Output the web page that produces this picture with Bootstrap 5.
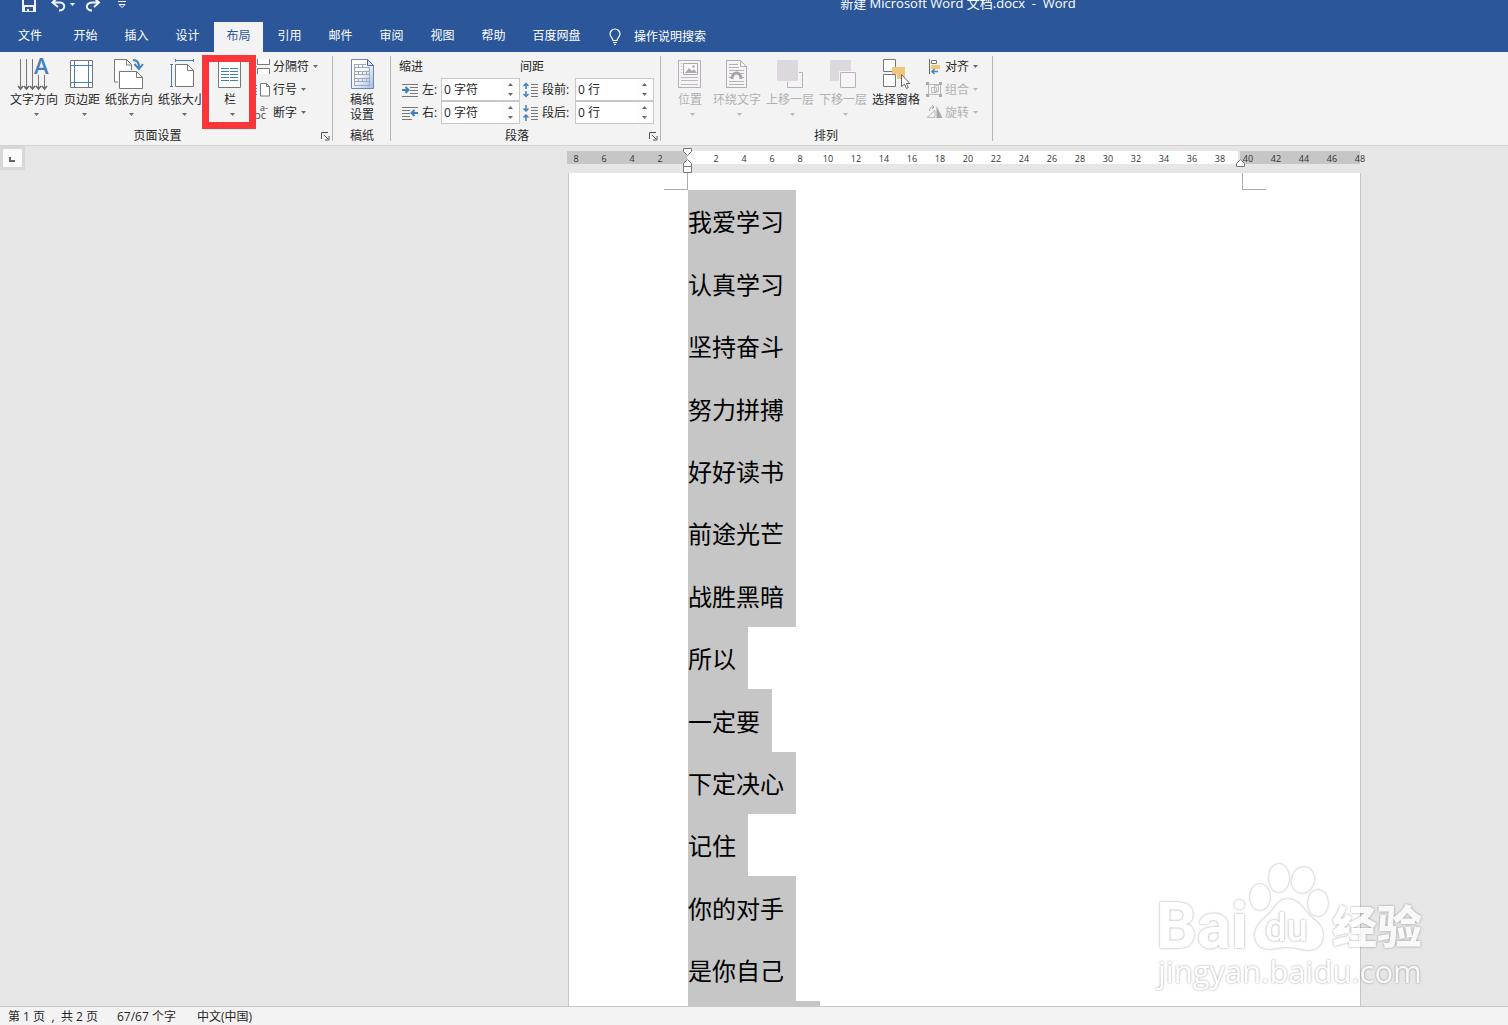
<!DOCTYPE html>
<html lang="zh-CN">
<head>
<meta charset="utf-8">
<meta name="viewport" content="width=device-width, initial-scale=1">
<title>新建 Microsoft Word 文档.docx - Word</title>
<link href="https://cdn.jsdelivr.net/npm/bootstrap@5.3.0/dist/css/bootstrap.min.css" rel="stylesheet">
<style>
  body { font-family: "Open Sans", "Noto Sans CJK SC", sans-serif; font-size: 12px; line-height: 16px; color: #262626; background: #e6e6e6; }
  svg { display: block; flex: none; overflow: visible; }
  .app-top { background: #2b579a; color: #fff; }
  .title-row { height: 22px; padding-left: 22px; }
  .title-row button, .plain-btn { background: none; border: 0; padding: 0; color: inherit; }
  .doc-title { left: 408px; right: 0; top: -6px; font-size: 13px; line-height: 18px; white-space: pre; }
  .tab-row { height: 30px; }
  .tab-row .nav-link { width: 49px; margin: 0 1px; padding: 0; line-height: 28px; text-align: center; color: #fff; border-radius: 0; white-space: nowrap; }
  .tab-row .nav-link.file-tab { width: 58px; }
  .tab-row .nav-link.wide-tab { width: 73px; }
  .tab-row .nav-link.active { background: #f3f3f3; color: #2b579a; }
  .tell-me { padding-left: 15px; gap: 13px; }
  .ribbon { height: 94px; background: #f3f3f3; border-bottom: 1px solid #d2d2d2; }
  .rgroup { position: relative; padding-top: 3px; }
  .rgroup::after { content: ""; position: absolute; right: 0; top: 4px; bottom: 4px; width: 1px; background: #b4b4b4; }
  .rbody { height: 73px; }
  .rlabel { line-height: 16px; text-align: center; padding-right: 2px; }
  .g-setup { width: 333px; } .g-setup .rbody { padding-left: 8px; }
  .g-grid { width: 58px; }
  .g-para { width: 270px; } .g-para .rbody { padding-left: 8px; }
  .g-arrange { width: 332px; } .g-arrange .rbody { padding-left: 7px; }
  .has-launcher .rlabel { padding-right: 18px; }
  .launcher { position: absolute; right: 3px; bottom: 4px; }
  .big-btn { display: flex; flex-direction: column; align-items: center; padding: 2px 0 0; border: 0; background: none; color: inherit; white-space: nowrap; flex: none; }
  .big-btn svg:first-child { margin-bottom: 1px; }
  .big-btn .caret { margin: 5px 0 0 4px; }
  .w40 { width: 40px; } .w44 { width: 44px; } .w50 { width: 50px; } .w52 { width: 52px; } .w56 { width: 56px; }
  .two-line { line-height: 15px; }
  .small-btn { display: flex; align-items: center; gap: 3px; height: 23px; padding: 0; border: 0; background: none; color: inherit; white-space: nowrap; }
  .small-col { margin-left: 4px; }
  .g-arrange .small-col { margin-left: 2px; }
  .small-btn .caret { margin-left: 1px; }
  button:disabled { color: #b1b1b1; }
  .caret { width: 5px; height: 3px; fill: #6a6a6a; }
  button:disabled .caret { fill: #b9b9b9; }
  .red-frame { left: 202px; top: 3px; width: 54px; height: 74px; border: 7px solid #fb3638; pointer-events: none; }
  .para-col { width: 121px; flex: none; }
  .para-col.spacing { width: 134px; }
  .para-col > div { height: 23px; }
  .para-col > div > svg { margin-left: 3px; }
  .para-col label { flex: 1; padding-left: 4px; white-space: nowrap; }
  .para-head { line-height: 23px; }
  .spin-box { width: 79px; height: 23px; border: 1px solid #c8c8c8; background: #fdfdfd; flex: none; }
  .spin-one { margin-right: 0; }
  .spin-box input { width: 60px; padding: 0 2px; border: 0; background: #fff; color: #262626; line-height: 19px; font-size: 12px; }
  .spin-box button { width: 17px; height: 10px; border: 0; padding: 0; background: none; display: flex; align-items: center; justify-content: center; }
  .workspace { display: grid; grid-template-columns: 567fr 794px 147fr; grid-template-rows: 27px 1fr; min-height: 0; overflow: hidden; }
  .tab-stop { width: 25px; height: 24px; border: 3px solid #d8d8d8; background: #fafafa; }
  .ruler { position: relative; height: 13px; margin-top: 5px; width: 793px; }
  .r-left { width: 120px; background: #c6c6c6; } .r-mid { flex: 1; background: #fff; margin-right: 2px; } .r-right { width: 120px; background: #c6c6c6; }
  .r-nums { position: absolute; left: -5px; top: 0; display: flex; font-size: 9px; line-height: 16px; color: #333; }
  .r-nums span { width: 28px; text-align: center; }
  .r-mark { position: absolute; top: -3px; }
  .m-zero { left: 116px; } .m-end { left: 669px; }
  .sheet { grid-column: 2; margin-left: 1px; background: #fff; border: 1px solid #c6c6c6; border-width: 0 1px; overflow: hidden; }
  .crop-marks { display: flex; justify-content: space-between; padding: 0 94px 0 95px; height: 17px; }
  .crop-marks i { width: 24px; border: 0 solid #ababab; border-bottom-width: 1px; }
  .crop-marks i:first-child { border-right-width: 1px; } .crop-marks i:last-child { border-left-width: 1px; }
  .doc-text { padding-left: 119px; font-family: "Noto Sans CJK SC", sans-serif; font-size: 24px; font-weight: 400; color: #000; }
  .doc-text p { width: max-content; margin: 0; padding-right: 12px; height: 62px; line-height: 61px; background: #c6c6c6; }
  .doc-text p:nth-child(5n+2), .doc-text p:nth-child(5n+4) { height: 63px; line-height: 63px; }
  .doc-text p.next-line { width: 132px; }
  .watermark { right: 73px; bottom: 25px; opacity: .75; }
  .watermark g { filter: drop-shadow(0 0 1px rgba(0,0,0,.5)); }
  .status { height: 19px; background: #f3f3f3; border-top: 1px solid #c6c6c6; padding-left: 8px; gap: 19px; line-height: 19px; }
  .status .counter { width: 61px; }
  .status .pages { width: 90px; display: flex; justify-content: space-between; }
</style>
<script src="https://cdn.jsdelivr.net/npm/bootstrap@5.3.0/dist/js/bootstrap.bundle.min.js"></script>
</head>
<body class="vh-100 d-flex flex-column overflow-hidden position-relative">

<svg width="0" height="0" class="position-absolute" aria-hidden="true">
  <symbol id="dn" viewBox="0 0 5 3"><path d="M0 0h5L2.500 3z"/></symbol>
  <symbol id="up" viewBox="0 0 5 3"><path d="M0 3h5L2.500 0z"/></symbol>
  <symbol id="launch" viewBox="0 0 9 9"><path d="M.5 7V.5H7M3 3l4 4M8 4v4H4" fill="none" stroke="#555"/></symbol>
</svg>

<header class="app-top flex-shrink-0">
  <div class="title-row d-flex position-relative overflow-hidden">
    <button type="button" aria-label="保存" class="align-self-start"><svg width="14" height="12" viewBox="22 0 14 12"><path d="M22 0h2v5h10V0h2v12H22zM25 7v4h2V9h2v2h4V7z" fill="#f0f3f8" fill-rule="evenodd"/></svg></button>
    <button type="button" aria-label="撤消" class="align-self-start ms-3"><svg width="25" height="12" viewBox="52 0 25 12"><path d="M57 -2L52.500 2.500 58 7M53 2.500h6c7-.5 7 8 0 8" fill="none" stroke="#f0f3f8" stroke-width="2"/><path d="M70 3h5l-2.500 3z" fill="#fff"/></svg></button>
    <button type="button" aria-label="恢复" class="align-self-start ms-2"><svg width="16" height="12" viewBox="85 0 16 12"><path d="M94-2l5 4.500L94 7M99 2.500h-6c-8 0-8 8-1 8" fill="none" stroke="#f0f3f8" stroke-width="2"/></svg></button>
    <button type="button" aria-label="自定义快速访问工具栏" class="align-self-start ms-3"><svg width="9" height="9" viewBox="117 0 9 9"><path d="M118 1.500h8M119 4.500h6l-3 3z" fill="none" stroke="#fff"/></svg></button>
    <div class="doc-title position-absolute text-center">新建 Microsoft Word 文档.docx  -  Word</div>
  </div>
  <nav class="tab-row nav flex-nowrap">
    <a class="nav-link file-tab" href="#">文件</a>
    <a class="nav-link" href="#">开始</a>
    <a class="nav-link" href="#">插入</a>
    <a class="nav-link" href="#">设计</a>
    <a class="nav-link active" href="#" aria-current="page">布局</a>
    <a class="nav-link" href="#">引用</a>
    <a class="nav-link" href="#">邮件</a>
    <a class="nav-link" href="#">审阅</a>
    <a class="nav-link" href="#">视图</a>
    <a class="nav-link" href="#">帮助</a>
    <a class="nav-link wide-tab" href="#">百度网盘</a>
    <button type="button" class="plain-btn tell-me d-flex align-items-center"><svg width="12" height="16" viewBox="0 0 12 16"><path d="M4 11.500C4 9 1 8 1 5a5 5 0 0 1 10 0c0 3-3 4-3 6.500zM4 13.500h4M5 15.500h2" fill="none" stroke="#fff" stroke-width="1.200"/></svg>操作说明搜索</button>
  </nav>
</header>

<section class="ribbon d-flex flex-shrink-0 position-relative" aria-label="布局">
  <div class="rgroup g-setup has-launcher flex-shrink-0">
    <div class="rbody d-flex">
      <button type="button" class="big-btn w52"><svg width="34" height="34" viewBox="17 57 34 34"><path d="M20.500 59v30M26.500 59v30M32.500 59v30M38.500 75v14M44.500 75v14" stroke="#777"/><path d="M18 86l2.500 3 2.500-3M24 86l2.500 3 2.500-3M30 86l2.500 3 2.500-3M36 86l2.500 3 2.500-3M42 86l2.500 3 2.500-3" fill="none" stroke="#666" stroke-width="1.500"/><text x="34" y="74" font-size="22" font-weight="600" font-family="Open Sans, sans-serif" fill="#4180bd">A</text></svg>文字方向<svg class="caret"><use href="#dn"/></svg></button>
      <button type="button" class="big-btn w44"><svg width="34" height="34" viewBox="65 57 34 34"><path d="M70.500 60.500h22v27h-22z" fill="#fff" stroke="#777"/><path d="M74.500 61v26M88.500 61v26M71 65.500h21M71 82.500h21" stroke="#4180bd"/></svg>页边距<svg class="caret"><use href="#dn"/></svg></button>
      <button type="button" class="big-btn w50"><svg width="34" height="34" viewBox="112 57 34 34"><path d="M114.500 59.500h12l5 5v17.500h-17z" fill="#fff" stroke="#777"/><path d="M126.500 59.500v5.500h5" fill="none" stroke="#777"/><path d="M118 70h16l10 8v12h-26z" fill="#f3f3f3"/><path d="M119.500 71.500h17l6 6v11h-23z" fill="#fff" stroke="#777"/><path d="M136.500 71.500v6h6" fill="none" stroke="#777"/><path d="M133 60c4 0 6 3 6 7" fill="none" stroke="#4180bd" stroke-width="2"/><path d="M134.500 64l4.500 5 4-5" fill="none" stroke="#4180bd" stroke-width="2"/></svg>纸张方向<svg class="caret"><use href="#dn"/></svg></button>
      <button type="button" class="big-btn w56"><svg width="34" height="34" viewBox="165 57 34 34"><path d="M175.500 64.500h12l6 6v16h-18z" fill="#fff" stroke="#777"/><path d="M187.500 64.500v6h6" fill="none" stroke="#777"/><path d="M175 60.500h18M175.500 59v3M193.500 59v3M171.500 64v23M170 64.500h3M170 86.500h3" stroke="#4180bd"/></svg>纸张大小<svg class="caret"><use href="#dn"/></svg></button>
      <button type="button" class="big-btn w40"><svg width="34" height="34" viewBox="213 57 34 34"><path d="M218.500 60.500h22v27h-22z" fill="#fff" stroke="#777"/><path d="M221 68.500h8M230 68.500h8M221 71.500h8M230 71.500h8M221 74.500h8M230 74.500h8M221 77.500h8M230 77.500h8M221 80.500h8M230 80.500h8" stroke="#4180bd"/></svg>栏<svg class="caret"><use href="#dn"/></svg></button>
      <div class="small-col">
        <button type="button" class="small-btn"><svg width="16" height="16" viewBox="254 58 16 16"><path d="M257.500 58v5.500h12V58M257.500 73v-5.500h12V73" fill="#fff" stroke="#777"/><path d="M254 63l3 2.500-3 2.500z" fill="#4180bd"/></svg>分隔符<svg class="caret"><use href="#dn"/></svg></button>
        <button type="button" class="small-btn"><svg width="16" height="16" viewBox="254 81 16 16"><path d="M260.500 82.500h6l3 3v9.500h-9z" fill="#fff" stroke="#777"/><path d="M266.500 82.500v3h3" fill="none" stroke="#777"/><path d="M255 84.500h3M255 87.500h3M255 90.500h3M255 93.500h3" stroke="#4180bd" stroke-dasharray="2 1"/></svg>行号<svg class="caret"><use href="#dn"/></svg></button>
        <button type="button" class="small-btn"><svg width="16" height="16" viewBox="254 104 16 16"><text x="260" y="110" font-size="9" fill="#444">a-</text><text x="254" y="118" font-size="11" fill="#444">bc</text></svg>断字<svg class="caret"><use href="#dn"/></svg></button>
      </div>
    </div>
    <div class="rlabel">页面设置</div>
    <button type="button" class="plain-btn launcher" aria-label="页面设置选项"><svg width="9" height="9"><use href="#launch"/></svg></button>
  </div>

  <div class="rgroup g-grid flex-shrink-0">
    <div class="rbody d-flex justify-content-center">
      <button type="button" class="big-btn two-line"><svg width="34" height="34" viewBox="345 57 34 34"><defs><linearGradient id="pg" x2="1" y2="1"><stop offset=".4" stop-color="#fff"/><stop offset="1" stop-color="#9dbcec"/></linearGradient></defs><path d="M351.500 59.500h16l6 6v23h-22z" fill="url(#pg)" stroke="#6c86b4"/><path d="M367.500 59.500v6h6z" fill="#dbe8fb" stroke="#46699e"/><path d="M354 64.500h12M354 67.500h16M354 71.500h16M354 74.500h16M354 78.500h16M354 81.500h16M354 85.500h16M354.500 64v22M358.500 64v3M358.500 71v3M358.500 78v3M362.500 64v3M362.500 71v3M362.500 78v3M366.500 67v1M366.500 71v3M366.500 78v3M369.500 67v19" stroke="#a0a8b8"/></svg><span>稿纸<br>设置</span></button>
    </div>
    <div class="rlabel p-0">稿纸</div>
  </div>

  <div class="rgroup g-para has-launcher flex-shrink-0">
    <div class="rbody d-flex">
      <div class="para-col">
        <div class="para-head">缩进</div>
        <div class="d-flex align-items-center"><svg width="16" height="14" viewBox="0 0 16 14"><path d="M0 1.500h16M8 4.500h8M8 7.500h8M8 10.500h8M0 13.500h16" stroke="#777"/><path d="M0 7h6M3.500 4l3 3-3 3" fill="none" stroke="#4180bd" stroke-width="2"/></svg>
          <label for="indL">左:</label>
          <div class="spin-box d-flex"><input id="indL" value="0 字符"><div><button type="button" aria-label="增加"><svg class="caret"><use href="#up"/></svg></button><button type="button" aria-label="减少"><svg class="caret"><use href="#dn"/></svg></button></div></div></div>
        <div class="d-flex align-items-center"><svg width="16" height="14" viewBox="0 0 16 14"><path d="M0 1.500h16M0 4.500h8M0 7.500h8M0 10.500h8M0 13.500h10" stroke="#777"/><path d="M16 7h-6M12.500 4l-3 3 3 3" fill="none" stroke="#4180bd" stroke-width="2"/></svg>
          <label for="indR">右:</label>
          <div class="spin-box d-flex"><input id="indR" value="0 字符"><div><button type="button" aria-label="增加"><svg class="caret"><use href="#up"/></svg></button><button type="button" aria-label="减少"><svg class="caret"><use href="#dn"/></svg></button></div></div></div>
      </div>
      <div class="para-col spacing">
        <div class="para-head">间距</div>
        <div class="d-flex align-items-center"><svg width="15" height="16" viewBox="0 0 15 16"><path d="M8 2.500h7M8 5.500h7M8 8.500h7M8 11.500h7M8 14.500h7" stroke="#777"/><path d="M3 7V1.500M.5 4L3 1.500 5.500 4M3 9v5.500M.5 12L3 14.500 5.500 12" fill="none" stroke="#4180bd" stroke-width="1.500"/></svg>
          <label for="spB">段前:</label>
          <div class="spin-box d-flex"><input id="spB" value="0 行"><div><button type="button" aria-label="增加"><svg class="caret"><use href="#up"/></svg></button><button type="button" aria-label="减少"><svg class="caret"><use href="#dn"/></svg></button></div></div></div>
        <div class="d-flex align-items-center"><svg width="15" height="16" viewBox="0 0 15 16"><path d="M8 2.500h7M8 5.500h7M8 8.500h7M8 11.500h7M8 14.500h7" stroke="#777"/><path d="M3 0v6M.5 3.500L3 6l2.500-2.500M3 16v-6M.5 12.500L3 10l2.500 2.500" fill="none" stroke="#4180bd" stroke-width="1.500"/></svg>
          <label for="spA">段后:</label>
          <div class="spin-box d-flex"><input id="spA" value="0 行"><div><button type="button" aria-label="增加"><svg class="caret"><use href="#up"/></svg></button><button type="button" aria-label="减少"><svg class="caret"><use href="#dn"/></svg></button></div></div></div>
      </div>
    </div>
    <div class="rlabel">段落</div>
    <button type="button" class="plain-btn launcher" aria-label="段落选项"><svg width="9" height="9"><use href="#launch"/></svg></button>
  </div>

  <div class="rgroup g-arrange flex-shrink-0">
    <div class="rbody d-flex">
      <button type="button" class="big-btn w44" disabled><svg width="34" height="34" viewBox="673 57 34 34"><path d="M678.500 60.500h22v27h-22z" fill="#f7f3f8" stroke="#b4b0b4"/><path d="M683.500 63.500h14v11h-14z" fill="#fbf8fb" stroke="#aaa"/><path d="M685 73l4-5 3 3 2-2 3 4z" fill="#aaa"/><circle cx="693.500" cy="66.500" r="1.200" fill="#aaa"/><path d="M681 63.500h1M681 66.500h1M681 69.500h1M681 72.500h1M681 77.500h17M681 80.500h17M681 84.500h17" stroke="#bbb"/></svg>位置<svg class="caret"><use href="#dn"/></svg></button>
      <button type="button" class="big-btn w50" disabled><svg width="34" height="34" viewBox="720 57 34 34"><path d="M726.500 60.500h14l6 6v21h-20z" fill="#f7f3f8" stroke="#b0adb0"/><path d="M740.500 60.500v6h6" fill="none" stroke="#b0adb0"/><path d="M729 64.500h9M729 67.500h10M729 70.500h15M729 73.500h3M741 73.500h3M729 77.500h2M742 77.500h2M729 81.500h15M729 84.500h15" stroke="#b4b4b4"/><path d="M732 79c0-8 9-8 9 0" fill="none" stroke="#a4a4a4" stroke-width="3"/></svg>环绕文字<svg class="caret"><use href="#dn"/></svg></button>
      <button type="button" class="big-btn w56" disabled><svg width="34" height="34" viewBox="773 57 34 34"><path d="M787.500 72.500h15v15h-15z" fill="#f7f3f8" stroke="#b4b4b4"/><path d="M776 59h23v23h-23z" fill="#f3f3f3"/><path d="M777 60h21v21h-21z" fill="#ddd8dd"/></svg>上移一层<svg class="caret"><use href="#dn"/></svg></button>
      <button type="button" class="big-btn w50" disabled><svg width="34" height="34" viewBox="826 57 34 34"><path d="M830 60h21v21h-21z" fill="#ddd8dd"/><path d="M839 71h18v18h-18z" fill="#f3f3f3"/><path d="M840.500 72.500h15v15h-15z" fill="#f7f3f8" stroke="#b4b4b4"/></svg>下移一层<svg class="caret"><use href="#dn"/></svg></button>
      <button type="button" class="big-btn w56"><svg width="34" height="34" viewBox="879 57 34 34"><path d="M883.500 59.500h12v12h-12zM883.500 74.500h12v12h-12z" fill="#fff" stroke="#777"/><path d="M892 67h13v12h-8v-5h-5z" fill="#f0c67b"/><path d="M901.500 74.500v12l3-2.500 2 4.500 1.800-1-2-4h3.500z" fill="#fff" stroke="#666"/></svg>选择窗格</button>
      <div class="small-col">
        <button type="button" class="small-btn"><svg width="16" height="16" viewBox="926 58 16 16"><path d="M929.500 58v15" stroke="#666"/><path d="M931.500 59.500h5v3h-5z" fill="#fff" stroke="#777"/><path d="M931 64h9v4h-9z" fill="#f0c67b"/><path d="M938 70.500h-6M934.500 68l-2.500 2.500 2.500 2.500" fill="none" stroke="#4180bd" stroke-width="1.400"/></svg>对齐<svg class="caret"><use href="#dn"/></svg></button>
        <button type="button" class="small-btn" disabled><svg width="16" height="16" viewBox="926 81 16 16"><path d="M928.500 83.500h12v10h-12zM931.500 86.500h5v5h-5zM934.500 84.500h4v6h-4z" fill="none" stroke="#bbb"/><path d="M926 81h3v3h-3zM939 81h3v3h-3zM926 93h3v3h-3zM939 93h3v3h-3z" fill="#aaa"/></svg>组合<svg class="caret"><use href="#dn"/></svg></button>
        <button type="button" class="small-btn" disabled><svg width="16" height="16" viewBox="926 104 16 16"><path d="M927 116.500h8v-7z" fill="none" stroke="#bbb"/><path d="M936.500 105v12h6z" fill="#a8a8a8"/><path d="M929.500 110c0-3 1-4 4-4M932 104l2 2-2 2" fill="none" stroke="#aaa"/></svg>旋转<svg class="caret"><use href="#dn"/></svg></button>
      </div>
    </div>
    <div class="rlabel">排列</div>
  </div>
  <div class="red-frame position-absolute"></div>
</section>

<main class="workspace flex-grow-1">
  <div class="tab-stop"><svg width="19" height="18" viewBox="3 149 19 18"><path d="M10 157v4h5" fill="none" stroke="#666" stroke-width="2"/></svg></div>
  <div class="ruler d-flex">
    <div class="r-left"></div><div class="r-mid"></div><div class="r-right"></div>
    <div class="r-nums"><span>8</span><span>6</span><span>4</span><span>2</span><span></span><span>2</span><span>4</span><span>6</span><span>8</span><span>10</span><span>12</span><span>14</span><span>16</span><span>18</span><span>20</span><span>22</span><span>24</span><span>26</span><span>28</span><span>30</span><span>32</span><span>34</span><span>36</span><span>38</span><span>40</span><span>42</span><span>44</span><span>46</span><span>48</span></div>
    <svg class="r-mark m-zero" width="9" height="25" viewBox="0 0 9 25"><path d="M.5.5h8v3l-4 4-4-4zM.5 18.500v-3l4-4 4 4v3zM.5 18.500h8v6h-8z" fill="#fff" stroke="#777"/></svg>
    <svg class="r-mark m-end" width="9" height="25" viewBox="0 0 9 25"><path d="M.5 18.500v-3l4-4 4 4v3z" fill="#fff" stroke="#777"/></svg>
  </div>
  <article class="sheet">
    <div class="crop-marks"><i></i><i></i></div>
    <div class="doc-text">
      <p>我爱学习</p>
      <p>认真学习</p>
      <p>坚持奋斗</p>
      <p>努力拼搏</p>
      <p>好好读书</p>
      <p>前途光芒</p>
      <p>战胜黑暗</p>
      <p>所以</p>
      <p>一定要</p>
      <p>下定决心</p>
      <p>记住</p>
      <p>你的对手</p>
      <p>是你自己</p>
      <p class="next-line"></p>
    </div>
  </article>
</main>

<svg class="watermark position-absolute" width="285" height="145" viewBox="1150 855 285 145" fill="#fff">
  <g><text x="1156" y="948" font-family="Roboto, sans-serif" font-weight="700" font-size="64">Bai</text></g>
  <g><ellipse cx="1260" cy="897" rx="10" ry="13"/><ellipse cx="1279" cy="878" rx="10" ry="14"/><ellipse cx="1303" cy="880" rx="11" ry="13" transform="rotate(15 1303 880)"/><ellipse cx="1318" cy="903" rx="10" ry="13"/><path d="M1288 899c-9 0-13 8-18 14-6 6-15 12-15 22 0 9 6 14 14 14 7 0 11-2 19-2s12 3 20 3c9 0 15-6 15-15 0-10-8-14-14-20-5-6-11-16-21-16z"/></g>
  <g><text x="1265" y="941" font-family="Roboto, sans-serif" font-weight="500" font-size="38">du</text></g>
  <g><text x="1332" y="944" font-family="Noto Sans CJK SC, sans-serif" font-weight="900" font-size="45">经验</text></g>
  <g><text x="1158" y="983" font-family="Open Sans, sans-serif" font-size="31">jingyan.baidu.com</text></g>
</svg>

<footer class="status d-flex flex-shrink-0"><span class="pages"><span>第 1 页</span><span>,</span><span>共 2 页</span></span><span class="counter">67/67 个字</span><span>中文(中国)</span></footer>
</body>
</html>
